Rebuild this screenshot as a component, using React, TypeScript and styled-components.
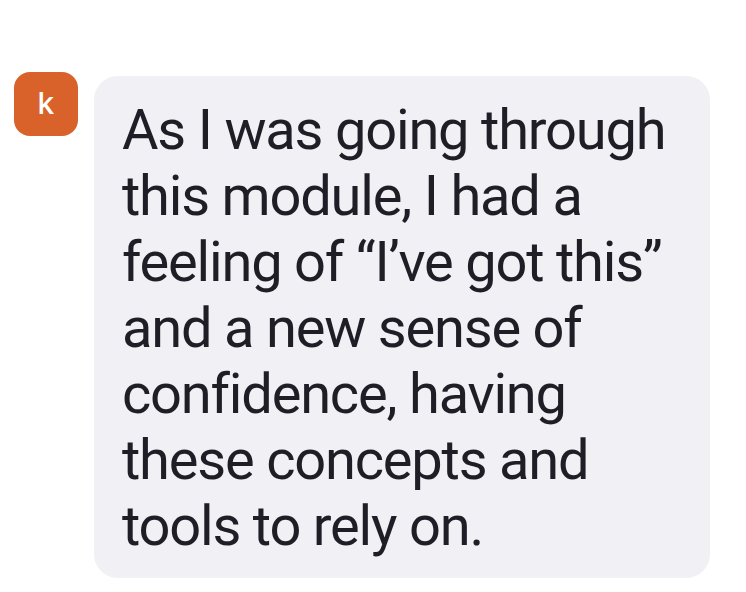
import React from "react";
import styled, { createGlobalStyle } from "styled-components";

const Global = createGlobalStyle`
  html, body { margin: 0; padding: 0; background: #ffffff; }
  body { font-family: Roboto, "Noto Sans", sans-serif; }
`;

const Row = styled.div`
  display: flex;
  align-items: flex-start;
  gap: 16px;
  padding: 72px 0 0 14px;
`;

const Avatar = styled.div`
  flex: none;
  width: 64px;
  height: 64px;
  border-radius: 16px;
  background: #d9622b;
  color: #ffffff;
  display: flex;
  align-items: center;
  justify-content: center;
  font-family: Inter, sans-serif;
  font-size: 30px;
  font-weight: 500;
  line-height: 1;
  padding-bottom: 3px;
  box-sizing: border-box;
`;

const Bubble = styled.div`
  margin-top: 4px;
  width: 616px;
  box-sizing: border-box;
  background: #f0f0f5;
  border-radius: 24px;
  padding: 21px 20px 19px 28px;
  color: #1f1e26;
  font-size: 56px;
  line-height: 66px;
  font-weight: 400;
  letter-spacing: -1.2px;
  white-space: pre;
`;

const text = `As I was going through
this module, I had a
feeling of \u201CI\u2019ve got this\u201D
and a new sense of
confidence, having
these concepts and
tools to rely on.`;

export default function App() {
  return (
    <>
      <Global />
      <Row>
        <Avatar>k</Avatar>
        <Bubble>{text}</Bubble>
      </Row>
    </>
  );
}
